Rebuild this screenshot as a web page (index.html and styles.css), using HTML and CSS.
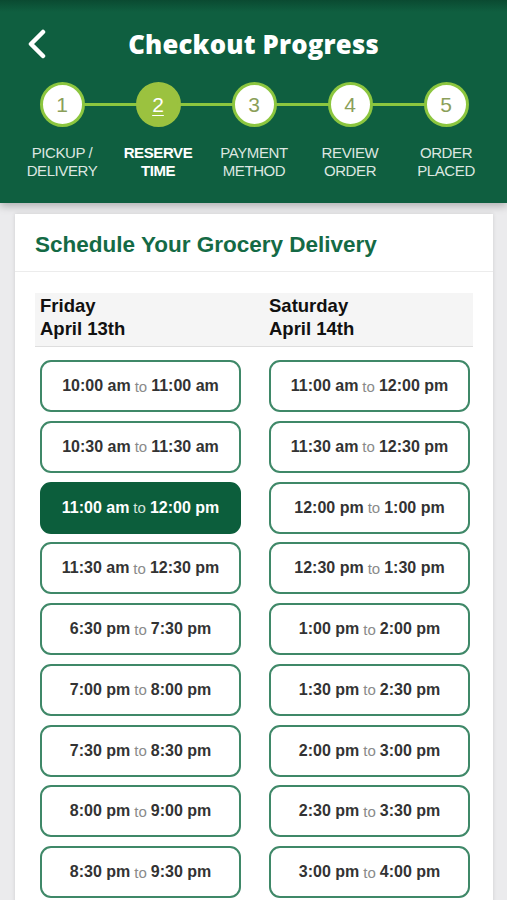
FILE: index.html
```html
<!DOCTYPE html>
<html>

<head>
    <link rel="stylesheet" href="styles.css">
</head>

<body>
    <div class="topbar">
        <div class="titlerow">
            <svg class="back" width="20" height="30" viewBox="0 0 20 30">
                <path d="M16 3 L4 15 L16 27" fill="none" stroke="#fff" stroke-width="4.5" stroke-linecap="round" stroke-linejoin="round" />
            </svg>
            <h1>Checkout Progress</h1>
        </div>
        <div class="steps">
            <div class="step">
                <div class="dot">1</div>
                <div class="label">PICKUP /<br>DELIVERY</div>
            </div>
            <div class="step active">
                <div class="dot"><u>2</u></div>
                <div class="label">RESERVE<br>TIME</div>
            </div>
            <div class="step">
                <div class="dot">3</div>
                <div class="label">PAYMENT<br>METHOD</div>
            </div>
            <div class="step">
                <div class="dot">4</div>
                <div class="label">REVIEW<br>ORDER</div>
            </div>
            <div class="step">
                <div class="dot">5</div>
                <div class="label">ORDER<br>PLACED</div>
            </div>
        </div>
    </div>

    <div class="card">
        <div class="card-title">Schedule Your Grocery Delivery</div>
        <div class="days">
            <div class="day">Friday<br>April 13th</div>
            <div class="day">Saturday<br>April 14th</div>
        </div>
        <div class="slots">
            <div class="slot"><b>10:00 am</b> <span>to</span> <b>11:00 am</b></div>
            <div class="slot"><b>11:00 am</b> <span>to</span> <b>12:00 pm</b></div>
            <div class="slot"><b>10:30 am</b> <span>to</span> <b>11:30 am</b></div>
            <div class="slot"><b>11:30 am</b> <span>to</span> <b>12:30 pm</b></div>
            <div class="slot selected"><b>11:00 am</b> <span>to</span> <b>12:00 pm</b></div>
            <div class="slot"><b>12:00 pm</b> <span>to</span> <b>1:00 pm</b></div>
            <div class="slot"><b>11:30 am</b> <span>to</span> <b>12:30 pm</b></div>
            <div class="slot"><b>12:30 pm</b> <span>to</span> <b>1:30 pm</b></div>
            <div class="slot"><b>6:30 pm</b> <span>to</span> <b>7:30 pm</b></div>
            <div class="slot"><b>1:00 pm</b> <span>to</span> <b>2:00 pm</b></div>
            <div class="slot"><b>7:00 pm</b> <span>to</span> <b>8:00 pm</b></div>
            <div class="slot"><b>1:30 pm</b> <span>to</span> <b>2:30 pm</b></div>
            <div class="slot"><b>7:30 pm</b> <span>to</span> <b>8:30 pm</b></div>
            <div class="slot"><b>2:00 pm</b> <span>to</span> <b>3:00 pm</b></div>
            <div class="slot"><b>8:00 pm</b> <span>to</span> <b>9:00 pm</b></div>
            <div class="slot"><b>2:30 pm</b> <span>to</span> <b>3:30 pm</b></div>
            <div class="slot"><b>8:30 pm</b> <span>to</span> <b>9:30 pm</b></div>
            <div class="slot"><b>3:00 pm</b> <span>to</span> <b>4:00 pm</b></div>
        </div>
    </div>
</body>

</html>
```

FILE: styles.css
```css
* {
    margin: 0;
    padding: 0;
    box-sizing: border-box;
}

body {
    background-color: #ebebed;
    font-family: "Liberation Sans", Arial, sans-serif;
    height: 900px;
    overflow: hidden;
}

.topbar {
    height: 203px;
    background: linear-gradient(#0a4a31 0px, #0f5f40 12px, #0f5f40 100%);
    box-shadow: 0 3px 8px rgba(0, 0, 0, 0.25);
    padding-top: 26px;
}

.titlerow {
    height: 36px;
    display: flex;
    align-items: center;
    justify-content: center;
}

.back {
    position: absolute;
    left: 27px;
    top: 29px;
}

.titlerow h1 {
    color: #fff;
    font-family: "Open Sans", "Liberation Sans", sans-serif;
    font-weight: 800;
    font-size: 25.7px;
    letter-spacing: 0.2px;
}

.steps {
    display: flex;
    margin: 20px 13px 0 14px;
}

.step {
    width: 96px;
    display: flex;
    flex-direction: column;
    align-items: center;
    position: relative;
}

.step::before,
.step::after {
    content: "";
    position: absolute;
    top: 21px;
    height: 3px;
    width: 50%;
    background-color: #8cc63f;
}

.step::before {
    left: 0;
}

.step::after {
    right: 0;
}

.step:first-child::before,
.step:last-child::after {
    display: none;
}

.dot {
    position: relative;
    z-index: 1;
    width: 45px;
    height: 45px;
    border-radius: 50%;
    border: 3px solid #8cc63f;
    background-color: #fff;
    color: #8b9f5a;
    font-size: 21px;
    display: flex;
    align-items: center;
    justify-content: center;
}

.step.active .dot {
    background-color: #9bc23f;
    border-color: #9bc23f;
    color: #fff;
}

.dot u {
    text-decoration-thickness: 1px;
    text-underline-offset: 3px;
}

.label {
    margin-top: 17px;
    color: #dde7e1;
    font-size: 15px;
    line-height: 18px;
    text-align: center;
    letter-spacing: -0.4px;
}

.step.active .label {
    color: #fff;
    font-weight: bold;
}

.card {
    margin: 11px 14px 0 15px;
    background-color: #fff;
    box-shadow: 0 0 4px rgba(0, 0, 0, 0.12);
    height: 700px;
}

.card-title {
    height: 58px;
    padding: 18px 0 0 20px;
    color: #146a45;
    font-size: 22.5px;
    font-weight: bold;
    border-bottom: 1px solid #ececec;
}

.days {
    margin: 21px 20px 0 20px;
    height: 54px;
    background-color: #f5f5f5;
    border-bottom: 1px solid #dedede;
    display: grid;
    grid-template-columns: 201px 201px;
    column-gap: 28px;
    padding: 1px 0 0 5px;
}

.day {
    font-size: 18.5px;
    font-weight: bold;
    line-height: 23px;
    color: #111;
}

.slots {
    margin: 13px 0 0 25px;
    display: grid;
    grid-template-columns: 201px 201px;
    column-gap: 28px;
    row-gap: 8.75px;
}

.slot {
    height: 52px;
    border: 2px solid #3f8868;
    border-radius: 11px;
    display: flex;
    align-items: center;
    justify-content: center;
    gap: 4px;
    font-size: 16px;
    color: #333;
}

.slot span {
    color: #8a8a8a;
    font-size: 15px;
}

.slot.selected {
    background-color: #0c5e3c;
    border-color: #0c5e3c;
    color: #fff;
}

.slot.selected span {
    color: #d6e4dc;
}
```
